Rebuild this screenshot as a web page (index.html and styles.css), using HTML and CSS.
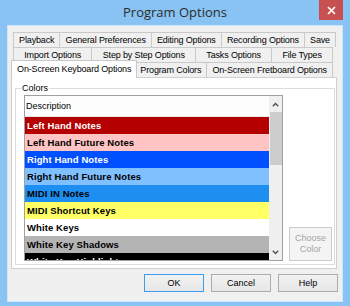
FILE: index.html
```html
<!DOCTYPE html>
<html>
<head>
<meta charset="utf-8">
<title>Program Options</title>
<link rel="stylesheet" href="styles.css">
</head>
<body>
<div class="window">
  <div class="titlebar">
    <div class="tb-left"></div>
    <div class="title">Program Options</div>
    <div class="tb-right">
      <div class="close"><svg width="9" height="9" viewBox="0 0 9 9"><path d="M1 1L8 8M8 1L1 8" stroke="#fff" stroke-width="1.7" fill="none"/></svg></div>
    </div>
  </div>
  <div class="client">
    <div class="tabs">
      <div class="tabrow r1">
        <div class="tab first">Playback</div>
        <div class="tab">General Preferences</div>
        <div class="tab">Editing Options</div>
        <div class="tab">Recording Options</div>
        <div class="tab">Save</div>
      </div>
      <div class="tabrow r2">
        <div class="tab first">Import Options</div>
        <div class="tab">Step by Step Options</div>
        <div class="tab">Tasks Options</div>
        <div class="tab">File Types</div>
      </div>
      <div class="tabrow r3">
        <div class="tab first sel">On-Screen Keyboard Options</div>
        <div class="tab">Program Colors</div>
        <div class="tab">On-Screen Fretboard Options</div>
      </div>
    </div>
    <div class="panel">
      <fieldset class="group">
        <legend>Colors</legend>
        <div class="listbox">
          <div class="list">
            <div class="lhead">Description</div>
            <div class="row c1">Left Hand Notes</div>
            <div class="row c2">Left Hand Future Notes</div>
            <div class="row c3">Right Hand Notes</div>
            <div class="row c4">Right Hand Future Notes</div>
            <div class="row c5">MIDI IN Notes</div>
            <div class="row c6">MIDI Shortcut Keys</div>
            <div class="row c7">White Keys</div>
            <div class="row c8">White Key Shadows</div>
            <div class="row c9">White Key Highlights</div>
          </div>
          <div class="vscroll">
            <div class="arrow up"><svg width="7" height="5" viewBox="0 0 7 5"><path d="M0.8 4.2L3.5 1.5L6.2 4.2" stroke="#505050" stroke-width="1.4" fill="none"/></svg></div>
            <div class="track"><div class="thumb"></div></div>
            <div class="arrow down"><svg width="7" height="5" viewBox="0 0 7 5"><path d="M0.8 0.8L3.5 3.5L6.2 0.8" stroke="#505050" stroke-width="1.4" fill="none"/></svg></div>
          </div>
        </div>
        <div class="side">
          <button class="btn choose" disabled>Choose<br>Color</button>
        </div>
      </fieldset>
    </div>
    <div class="buttons">
      <button class="btn def">OK</button>
      <button class="btn">Cancel</button>
      <button class="btn">Help</button>
    </div>
  </div>
</div>
</body>
</html>
```

FILE: styles.css
```css
* { box-sizing: border-box; }
html, body { margin: 0; padding: 0; }
body {
  width: 350px;
  height: 306px;
  overflow: hidden;
  font-family: "Liberation Sans", Arial, sans-serif;
  font-size: 9px;
  color: #000;
}
.window {
  width: 350px;
  height: 306px;
  background: #88c3f3;
  display: flex;
  flex-direction: column;
}
.titlebar {
  height: 25px;
  flex: none;
  display: grid;
  grid-template-columns: 1fr auto 1fr;
  align-items: start;
}
.title {
  font-family: "Open Sans", "Noto Sans", sans-serif;
  font-size: 13px;
  line-height: 25px;
  color: #2b2b2b;
  align-self: center;
}
.tb-right {
  justify-self: end;
  margin-right: 7px;
}
.close {
  width: 24px;
  height: 20px;
  background: #c75050;
  display: flex;
  align-items: center;
  justify-content: center;
}
.client {
  flex: 1;
  margin: 0 7px 4px 7px;
  background: #f0f0f0;
  border: 1px solid #cfe5f9;
  padding: 6px 5px 0 3px;
  display: flex;
  flex-direction: column;
}
.tabs {
  display: flex;
  flex-direction: column;
}
.tabrow {
  display: flex;
  height: 15px;
  margin-left: 2px;
  margin-right: 4px;
  letter-spacing: -0.15px;
}
.tabrow.r1 { margin-right: 1px; }
.tab {
  flex: 1 1 auto;
  padding: 0 3px;
  border-top: 1px solid #c9c9c9;
  border-right: 1px solid #c9c9c9;
  background: #f0f0f0;
  display: flex;
  align-items: center;
  justify-content: center;
  white-space: nowrap;
  line-height: 11px;
}
.tab.first { border-left: 1px solid #c9c9c9; }
.tab.sel {
  background: #fff;
  margin: -2px -2px -1px -2px;
  position: relative;
  z-index: 1;
  padding-bottom: 1px;
}
.panel {
  height: 192px;
  flex: none;
  background: #fff;
  border: 1px solid #d0d0d0;
  display: flex;
  flex-direction: column;
}
.group {
  flex: 1;
  margin: 5px 1px 3px 3px;
  padding: 1px 2px 3px 8px;
  border: 1px solid #dcdcdc;
  display: flex;
  align-items: flex-end;
  gap: 6px;
  min-width: 0;
}
.group legend {
  padding: 0 1px;
  margin-left: -3px;
  line-height: 11px;
  font-size: 9px;
}
.listbox {
  width: 259px;
  height: 166px;
  border: 1px solid #a0a0a0;
  display: flex;
  align-self: flex-start;
  background: #fff;
}
.list {
  flex: 1;
  overflow: hidden;
  display: flex;
  flex-direction: column;
}
.lhead {
  height: 21px;
  flex: none;
  padding-left: 1px;
  display: flex;
  align-items: center;
  border-bottom: 1px solid #e8e8e8;
  background: #fdfdfd;
}
.row {
  height: 17px;
  flex: none;
  padding-left: 2px;
  display: flex;
  align-items: center;
  font-weight: bold;
  font-size: 9.5px;
  letter-spacing: 0.1px;
  white-space: nowrap;
}
.c1 { background: #b40000; color: #fff; }
.c2 { background: #ffc4c4; }
.c3 { background: #0050ff; color: #fff; }
.c4 { background: #80c0ff; }
.c5 { background: #1e8ff0; }
.c6 { background: #ffff66; }
.c7 { background: #fff; }
.c8 { background: #b4b4b4; }
.c9 { background: #000; color: #fff; }
.vscroll {
  width: 13px;
  flex: none;
  background: #f0f0f0;
  display: flex;
  flex-direction: column;
}
.arrow {
  height: 16px;
  flex: none;
  display: flex;
  align-items: center;
  justify-content: center;
}
.track {
  flex: 1;
  display: flex;
  flex-direction: column;
  padding: 0 0 0 1px;
}
.thumb {
  height: 53px;
  background: #cdcdcd;
}
.side {
  flex: 1;
  display: flex;
  align-items: flex-end;
}
.btn {
  font-family: "Liberation Sans", Arial, sans-serif;
  font-size: 9px;
  color: #000;
  background: linear-gradient(#f2f2f2, #e6e6e6);
  border: 1px solid #acacac;
  padding: 0;
  margin: 0;
}
.choose {
  width: 43px;
  height: 34px;
  background: #f4f4f4;
  border-color: #cbcbcb;
  color: #a4a4a4;
  line-height: 11px;
}
.buttons {
  display: flex;
  justify-content: flex-end;
  gap: 7px;
  margin-top: 5px;
  margin-right: -1px;
}
.buttons .btn {
  width: 60px;
  height: 18px;
}
.buttons .def {
  border-color: #3c9df0;
}
```
